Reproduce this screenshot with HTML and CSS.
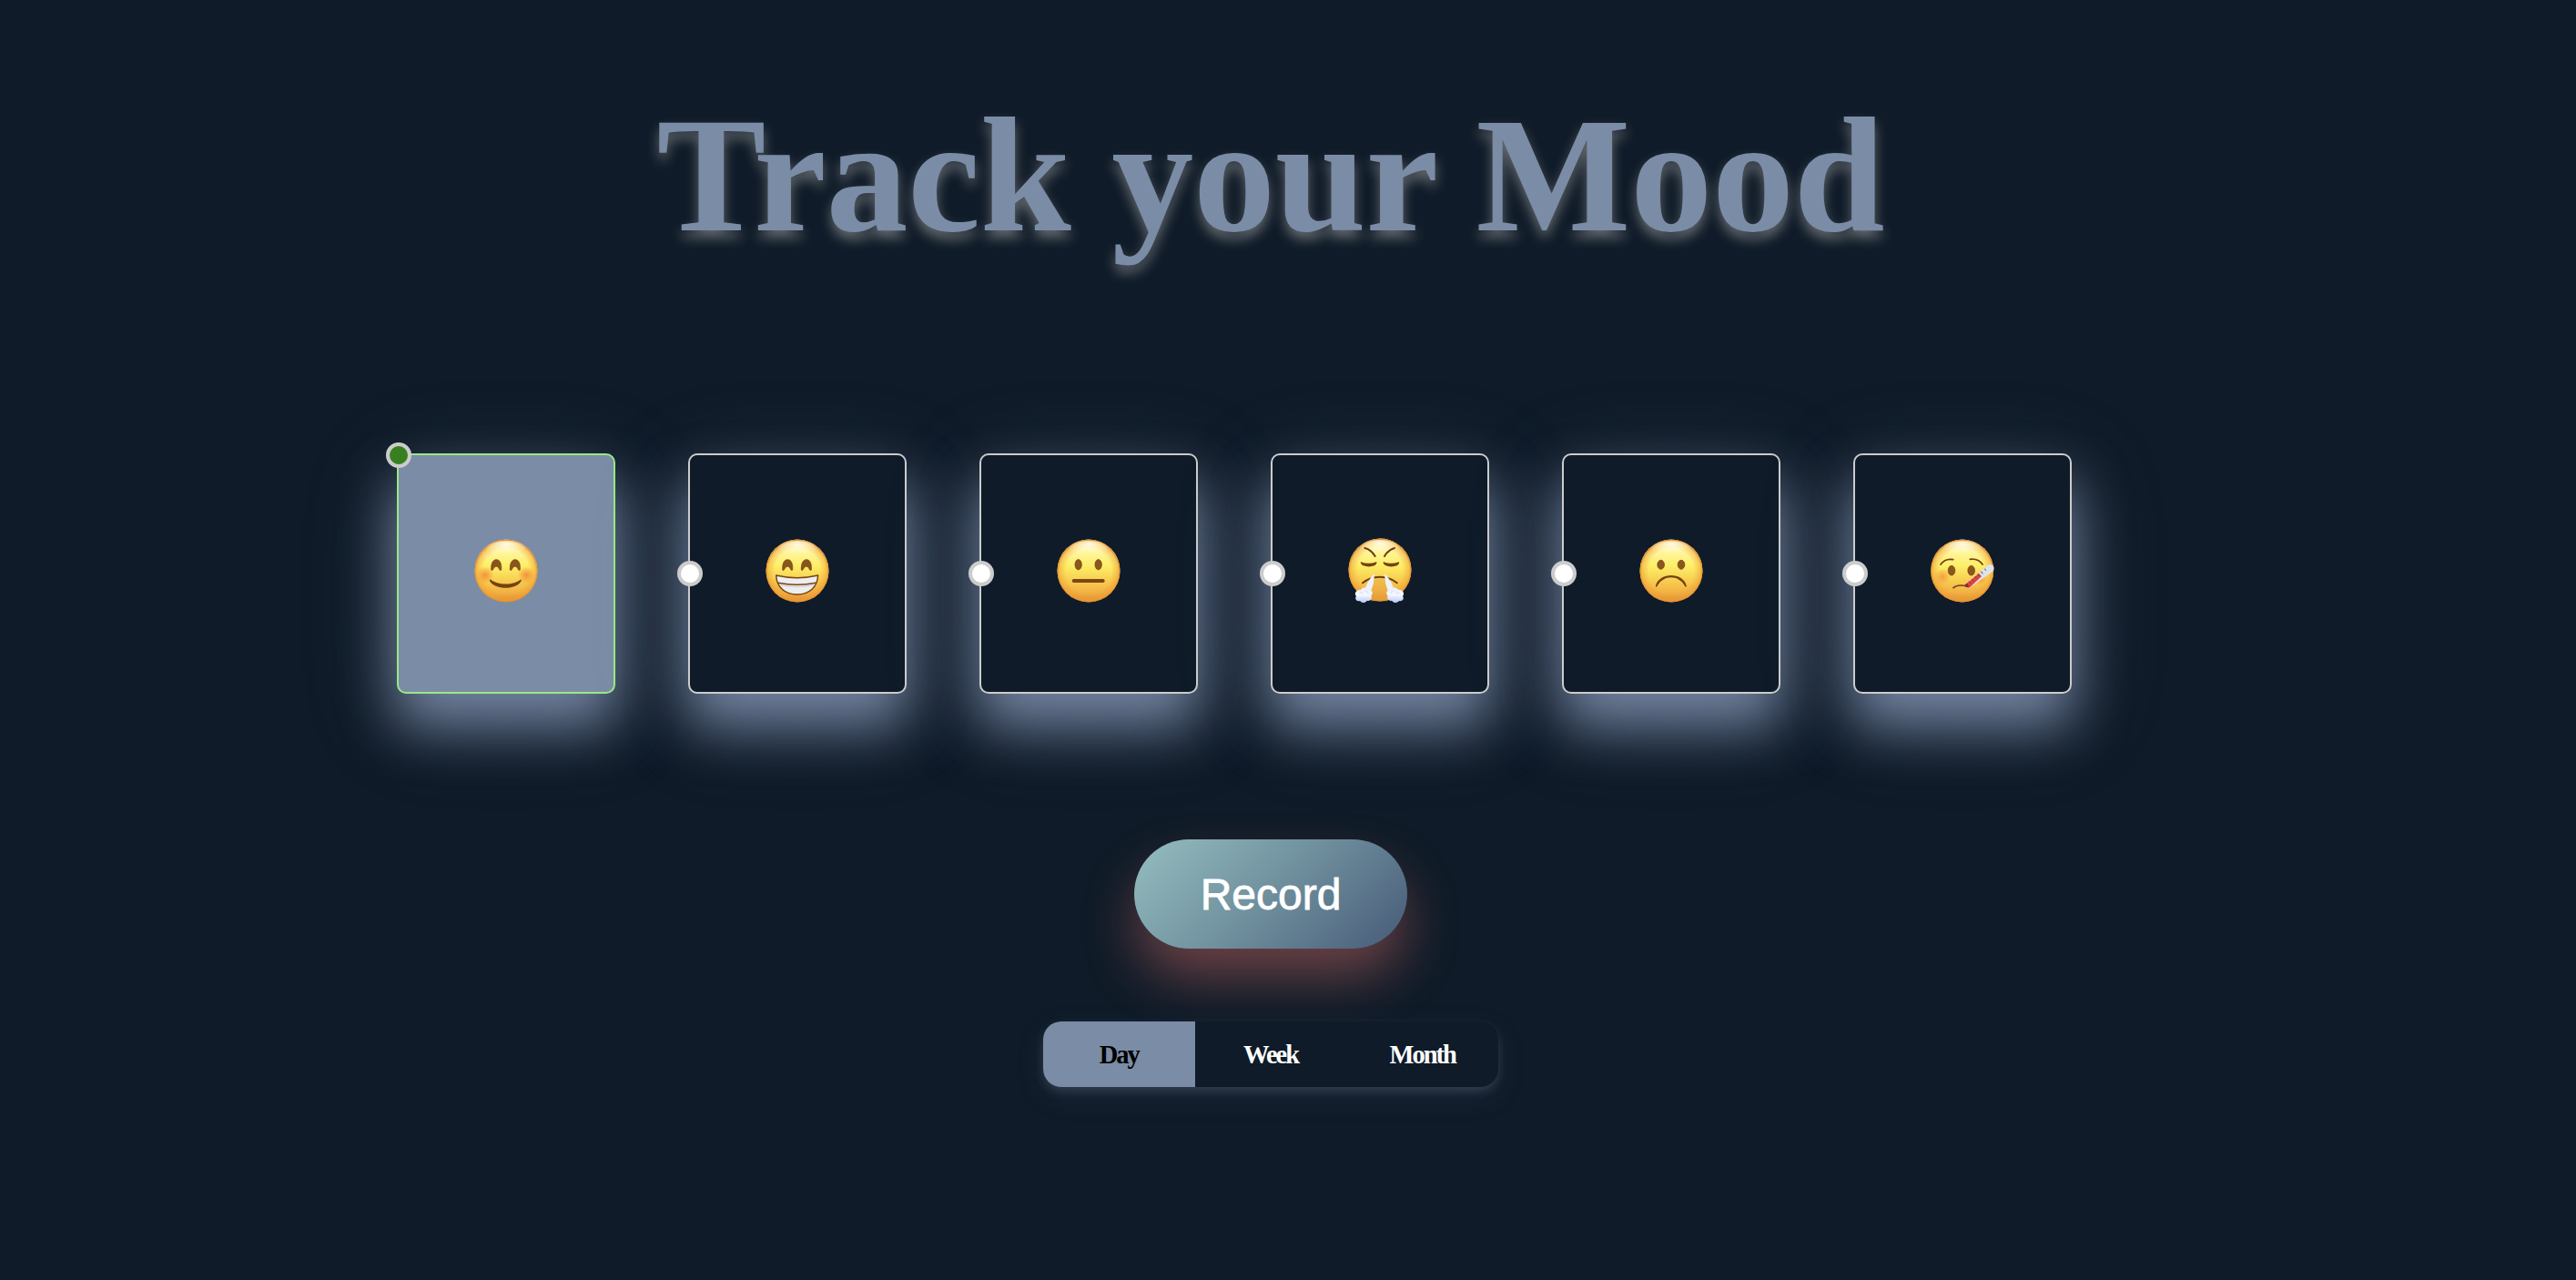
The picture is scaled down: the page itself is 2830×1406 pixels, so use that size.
FILE: index.html
```html
<!DOCTYPE html>
<html lang="en">
<head>
<meta charset="utf-8">
<title>Track your Mood</title>
<link rel="stylesheet" href="styles.css">
</head>
<body>
<svg class="defs" aria-hidden="true">
  <defs>
    <linearGradient id="skin" x1="0" y1="0" x2="0" y2="1">
      <stop offset="0" stop-color="#fff6b4"/><stop offset=".14" stop-color="#fff7ac"/>
      <stop offset=".42" stop-color="#fdef68"/><stop offset=".62" stop-color="#f8d354"/>
      <stop offset=".85" stop-color="#f2b043"/><stop offset="1" stop-color="#de9035"/>
    </linearGradient>
    <radialGradient id="rim" cx=".5" cy=".51" r=".5">
      <stop offset=".72" stop-color="#f0962f" stop-opacity="0"/>
      <stop offset=".93" stop-color="#ee9a31" stop-opacity=".5"/>
      <stop offset="1" stop-color="#dc8226" stop-opacity=".9"/>
    </radialGradient>
    <radialGradient id="shine" cx=".5" cy=".2" r=".6">
      <stop offset="0" stop-color="#fffef2" stop-opacity=".9"/><stop offset="1" stop-color="#fffbc0" stop-opacity="0"/>
    </radialGradient>
    <radialGradient id="blush"><stop offset="0" stop-color="#f28a34" stop-opacity=".9"/><stop offset="1" stop-color="#f28a34" stop-opacity="0"/></radialGradient>
    <linearGradient id="steam" x1="0" y1="0" x2="0" y2="1"><stop offset="0" stop-color="#e9eefb"/><stop offset=".5" stop-color="#f6f8ff"/><stop offset="1" stop-color="#b5c9f5"/></linearGradient>
    <g id="face">
      <circle cx="169" cy="170" r="103.5" fill="url(#skin)"/>
      <circle cx="169" cy="170" r="103.5" fill="url(#rim)"/>
      <ellipse cx="169" cy="100" rx="66" ry="29" fill="url(#shine)"/>
    </g>
    <g id="happy-eyes" fill="#8a551b" stroke="#6f3e10" stroke-width="2">
      <path d="M120 167C119 146 125 133 137 133S155 147 153 167C150 171 147 167 145 162C140 153 133 154 128 162C126 167 123 171 120 167Z"/>
      <path d="M182 167C181 146 187 133 199 133S217 147 215 167C212 171 209 167 207 162C202 153 195 154 190 162C188 167 185 171 182 167Z"/>
    </g>
    <g id="cloud">
      <path d="M148 181Q128 204 119 232L139 240Q150 211 151 181Z" fill="#eef2fc"/>
      <path d="M106 232C114 220 130 224 134 234C145 234 148 246 140 251C146 263 136 271 127 268C119 278 108 276 103 269C91 272 85 261 91 254C83 244 90 232 106 232Z" fill="url(#steam)"/>
      <path d="M101 244q8-6 13 2m7-9q10 1 10 9m-24 13q8 6 16-1" fill="none" stroke="#d4def5" stroke-width="3"/>
    </g>
  </defs>
</svg>
<main class="page">
  <h1 class="title">Track your Mood</h1>
  <div class="moods">
    <label class="mood mood--selected"><span class="dot"></span>
      <svg class="emoji" viewBox="64 65 210 210"><use href="#face"/>
        <circle cx="100" cy="184" r="29" fill="url(#blush)"/><circle cx="236" cy="184" r="29" fill="url(#blush)"/>
        <use href="#happy-eyes"/>
        <path d="M116 198C142 219 194 219 218 198C221 201 218 207 213 211C192 231 143 231 121 211C116 207 113 201 116 198Z" fill="#75430f"/>
      </svg></label>
    <label class="mood"><span class="dot"></span>
      <svg class="emoji" viewBox="64 65 210 210"><use href="#face"/><use href="#happy-eyes"/>
        <path d="M99 185Q168 201 237 185C235 225 207 248 168 248S101 225 99 185Z" fill="#eeedf0" stroke="#76440f" stroke-width="4.5" stroke-linejoin="round"/>
        <path d="M106 210Q168 222 230 210" fill="none" stroke="#76440f" stroke-width="4.5"/>
        <path d="M114 217Q168 228 222 217" fill="none" stroke="#c9c9d0" stroke-width="3"/>
      </svg></label>
    <label class="mood"><span class="dot"></span>
      <svg class="emoji" viewBox="64 65 210 210"><use href="#face"/>
        <g fill="#8b571d" stroke="#6f3e10" stroke-width="2"><ellipse cx="135" cy="149.500" rx="11" ry="17"/><ellipse cx="201" cy="149.500" rx="11" ry="17"/></g>
        <rect x="114" y="197" width="108" height="12" rx="6" fill="#7b4816"/>
      </svg></label>
    <label class="mood"><span class="dot"></span>
      <svg class="emoji" viewBox="64 65 210 210"><use href="#face" y="-3"/>
        <g fill="none" stroke="#6f3c10" stroke-linecap="round">
          <path d="M119 95Q140 100 153 122M217 95Q197 100 184 122" stroke-width="6"/>
          <path d="M112 210Q136 190 168 190T225 210" stroke-width="6"/>
        </g>
        <g fill="#74420f"><path d="M106 141Q132 150 157 141C161 142 157 149 151 153Q132 160 112 152C106 147 103 142 106 141Z"/><path d="M181 141Q206 150 231 141C235 142 231 149 225 153Q206 160 187 152C180 147 178 142 181 141Z"/></g>
        <path d="M150 194H185L195 238V270H139V238Z" fill="#e7a53e" opacity=".4"/>
        <use href="#cloud"/><use href="#cloud" transform="translate(335 0) scale(-1 1)"/>
      </svg></label>
    <label class="mood"><span class="dot"></span>
      <svg class="emoji" viewBox="64 65 210 210"><use href="#face"/>
        <g fill="#8b571d" stroke="#6f3e10" stroke-width="2"><ellipse cx="135" cy="150" rx="11.500" ry="15"/><ellipse cx="202" cy="150" rx="11.500" ry="15"/></g>
        <path d="M118 219C130 174 208 174 219 219C220 224 217 224 214 220C194 182 143 182 123 220C120 224 117 224 118 219Z" fill="#75430f"/>
      </svg></label>
    <label class="mood"><span class="dot"></span>
      <svg class="emoji" viewBox="64 65 210 210"><use href="#face" x="-1"/>
        <circle cx="103" cy="189" r="27" fill="url(#blush)" opacity=".8"/><circle cx="226" cy="195" r="22" fill="url(#blush)"/>
        <g fill="#8b571d" stroke="#6f3e10" stroke-width="2"><ellipse cx="133" cy="169" rx="11.500" ry="16"/><ellipse cx="198" cy="169" rx="11.500" ry="16"/></g>
        <path d="M97 149Q112 128 138 133M194 132Q221 129 235 149" fill="none" stroke="#74420f" stroke-width="5.500" stroke-linecap="round"/>
        <path d="M139 226Q153 214 181 220" fill="none" stroke="#74420f" stroke-width="5" stroke-linecap="round"/>
        <path d="M174 219L251 152C260 145 273 151 273 162C273 166 270 171 266 174L195 225Q190 229 180 224Z" fill="#dfe2e7"/>
        <path d="M175 218L223 178L232 188L195 223Q188 228 178 223Z" fill="#e2433f"/>
        <path d="M174 219L185 210L191 225Q183 226 174 219Z" fill="#8b2c28"/>
        <path d="M190 205l5 6m5-14l5 6m5-14l5 6m4-14l5 7m6-16l6 8m6-17l4 6" stroke="#4f4248" stroke-width="3"/>
      </svg></label>
  </div>
  <button class="record">Record</button>
  <nav class="tabs">
    <a class="tab tab--active">Day</a>
    <a class="tab">Week</a>
    <a class="tab">Month</a>
  </nav>
</main>
</body>
</html>
```
FILE: styles.css
```css
* { box-sizing: border-box; }
body {
  margin: 0;
  min-height: 100vh;
  background: #0f1b28;
  font-family: "Liberation Serif", "Times New Roman", serif;
}
.defs { position: absolute; width: 0; height: 0; }
.page {
  display: flex;
  flex-direction: column;
  align-items: center;
  width: 2792px;
  padding-top: 91px;
}
.title {
  margin: 0 0 203px;
  font-size: 180px;
  line-height: 204px;
  font-weight: bold;
  letter-spacing: -.3px;
  white-space: nowrap;
  color: #7b8ca6;
  text-shadow: 0 8px 14px rgba(200, 198, 195, .46);
}
.moods { display: flex; }
.mood {
  position: relative;
  display: flex;
  align-items: center;
  justify-content: center;
  width: 240px;
  height: 264px;
  margin-right: 80px;
  padding-bottom: 7px;
  border: 2px solid #ccc;
  border-radius: 10px;
  background: #0f1b28;
  box-shadow: 0 34px 60px rgba(121, 138, 167, .92), 0 24px 100px rgba(123, 138, 160, .28);
}
.mood--selected { background: #7b8ca6; border-color: #98e986; }
.dot {
  position: absolute;
  left: -14px;
  top: 116px;
  width: 28px;
  height: 28px;
  border: 4px solid #ccc;
  border-radius: 50%;
  background: #fff;
}
.mood--selected .dot { top: -14px; background: #38801f; }
.emoji { width: 70px; height: 70px; overflow: visible; }
.record {
  width: 300px;
  height: 120px;
  margin: 160px 0 80px;
  padding: 0;
  border: 0;
  border-radius: 60px;
  font: 48px/122px "Liberation Sans", Arial, sans-serif;
  color: #fff;
  -webkit-text-stroke: .8px #fff;
  background: linear-gradient(135deg, #95bec0 0%, #6f8f9d 50%, #475a78 100%);
  box-shadow: 0 32px 60px -3px rgba(213, 111, 102, .48);
}
.tabs {
  display: flex;
  width: 500px;
  height: 72px;
  border-radius: 20px;
  overflow: hidden;
  background: #0f1b28;
  box-shadow: 0 5px 12px -1px rgba(150, 145, 165, .26), 0 10px 30px rgba(80, 90, 130, .18);
}
.tab {
  flex: 1;
  display: flex;
  align-items: center;
  justify-content: center;
  padding-top: 1px;
  color: #fff;
  font-size: 28.5px;
  font-weight: bold;
  letter-spacing: -2px;
}
.tab--active { color: #000; background: #7b8ca6; }
```
